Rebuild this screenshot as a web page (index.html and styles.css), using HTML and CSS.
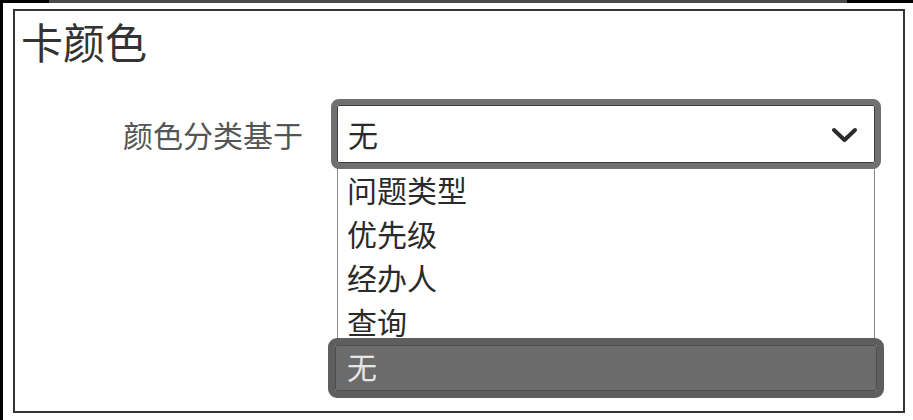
FILE: index.html
```html
<!DOCTYPE html>
<html lang="zh-CN">

<head>
  <meta charset="UTF-8">
  <meta name="viewport" content="width=device-width, initial-scale=1.0">
  <title>卡颜色</title>
  <link rel="stylesheet" href="styles.css">
</head>

<body>
  <div class="screen">
    <div class="topbar"></div>
    <div class="panel">
      <h2 class="title">卡颜色</h2>
      <div class="form-row">
        <label class="label">颜色分类基于</label>
        <div class="field">
          <div class="select">
            <span class="value">无</span>
            <svg class="chevron" width="27" height="16" viewBox="0 0 27 16">
              <polyline points="3,3 13.5,13 24,3" fill="none" stroke="#2b2b2b" stroke-width="4" stroke-linecap="round" stroke-linejoin="round" />
            </svg>
          </div>
          <ul class="options">
            <li>问题类型</li>
            <li>优先级</li>
            <li>经办人</li>
            <li>查询</li>
            <li class="selected">无</li>
          </ul>
        </div>
      </div>
    </div>
  </div>
</body>

</html>
```

FILE: styles.css
```css
* {
  box-sizing: border-box;
}

body {
  margin: 0;
  background: #fff;
  font-family: "Noto Sans CJK SC", "Noto Sans", sans-serif;
}

.screen {
  height: 420px;
  border-left: 3px solid #000;
}

/* 顶部的深色条 */
.topbar {
  height: 3px;
  background: linear-gradient(to right, #000 46px, #4a4a4a 46px, #4a4a4a 844px, #000 844px);
}

.panel {
  width: 892px;
  height: 404px;
  margin: 6px 0 0 10px;
  border: 2px solid #333;
  background: #fff;
}

.title {
  margin: 9px 0 0 6px;
  font-size: 42px;
  line-height: 42px;
  font-weight: normal;
  color: #333;
}

.form-row {
  display: flex;
  align-items: flex-start;
  gap: 34px;
  margin-top: 43px;
}

.label {
  width: 288px;
  height: 58px;
  display: flex;
  align-items: center;
  justify-content: flex-end;
  font-size: 30px;
  color: #555;
}

.field {
  width: 538px;
}

/* 选择框，外圈是聚焦时的粗边 */
.select {
  position: relative;
  z-index: 1;
  display: flex;
  align-items: center;
  justify-content: space-between;
  height: 58px;
  padding: 0 16px 0 10px;
  border: 1px solid #3d3d3d;
  border-radius: 2px;
  outline: 6px solid #707070;
  font-size: 30px;
  line-height: 40px;
  color: #2a2a2a;
  background: #fff;
}

.chevron {
  display: block;
  margin-top: 2px;
}

.options {
  list-style: none;
  margin: 0;
  padding: 4px 0 0;
  border-left: 1px solid #8a8a8a;
  border-right: 1px solid #8a8a8a;
}

.options > li {
  height: 44px;
  padding-left: 9px;
  font-size: 30px;
  line-height: 44px;
  color: #2a2a2a;
}

.options > li.selected {
  position: relative;
  height: 46px;
  margin: 2px -3px 0;
  padding: 0 0 6px 11px;
  line-height: 40px;
  color: #e6e6e6;
  background: #6b6b6b;
  border: 1px solid #4e4e4e;
  border-radius: 2px;
  outline: 7px solid #5e5e5e;
}
```
